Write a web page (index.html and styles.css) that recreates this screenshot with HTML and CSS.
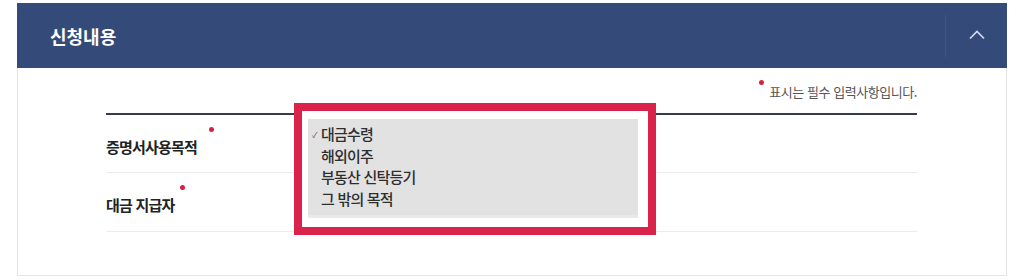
FILE: index.html
```html
<!DOCTYPE html>
<html lang="ko">
<head>
<meta charset="utf-8">
<link rel="stylesheet" href="styles.css">
</head>
<body>
<div class="page">
  <div class="section">
    <div class="section-head">
      <h2 class="section-title">신청내용</h2>
      <div class="toggle">
        <svg width="16" height="10" viewBox="0 0 16 10"><polyline points="1,8.5 8,1.5 15,8.5" fill="none" stroke="#d3ddf0" stroke-width="1.6"/></svg>
      </div>
    </div>
    <div class="section-body">
      <p class="note"><span class="dot note-dot"></span>표시는 필수 입력사항입니다.</p>
      <div class="form">
        <div class="row">
          <div class="label">증명서사용목적<span class="dot label-dot wide"></span></div>
        </div>
        <div class="row">
          <div class="label">대금 지급자<span class="dot label-dot"></span></div>
        </div>
      </div>
    </div>
  </div>
  <div class="highlight">
    <ul class="listbox">
      <li class="opt selected"><span class="check">✓</span>대금수령</li>
      <li class="opt">해외이주</li>
      <li class="opt">부동산 신탁등기</li>
      <li class="opt">그 밖의 목적</li>
    </ul>
  </div>
</div>
</body>
</html>
```

FILE: styles.css
```css
* { box-sizing: border-box; }
html, body { margin: 0; padding: 0; background: #ffffff; }
body { font-family: "Noto Sans CJK KR", "Noto Sans", sans-serif; color: #333; }
.page { position: relative; width: 1024px; height: 280px; padding-top: 3px; }
.section { margin-left: 17px; width: 990px; }
.section-head {
  height: 65px; background: #344b79;
  display: flex; align-items: center; justify-content: space-between;
}
.section-title {
  margin: 0; padding-left: 33px; color: #ffffff;
  font-size: 18px; font-weight: 700; letter-spacing: 0; line-height: 24px;
}
.toggle {
  width: 62px; height: 42px; border-left: 1px solid #3f5687;
  display: flex; align-items: center; justify-content: center;
}
.toggle svg { display: block; margin-top: -1px; }
.section-body {
  border: 1px solid #e4e4e4; border-top: none;
  padding: 14px 89px 43px 88px; height: 208px;
}
.note {
  margin: 0 0 11px; font-size: 13px; line-height: 20px;
  color: #555; letter-spacing: -0.45px;
  display: flex; justify-content: flex-end; align-items: flex-start;
}
.dot { display: inline-block; width: 5px; height: 5px; border-radius: 50%; background: #d6223f; flex: none; }
.note-dot { margin-top: -2px; margin-right: 5px; }
.form { border-top: 2px solid #333c4f; }
.row {
  height: 58px; border-bottom: 1px solid #ececec;
  display: flex; align-items: center; padding-top: 7px;
}
.row + .row { height: 59px; padding-top: 5px; }
.label {
  display: flex; align-items: flex-start; font-size: 15px; font-weight: 700;
  line-height: 20px; letter-spacing: -0.8px; color: #222;
}
.label-dot { margin-top: -10px; margin-left: 6px; }
.label-dot.wide { margin-left: 12px; }
.highlight {
  position: absolute; left: 294px; top: 103px; width: 362px; height: 132px;
  border: 8px solid #d9234a; background: #ffffff;
  padding: 8px 10px 8px 6px;
}
.listbox {
  list-style: none; margin: 0; height: 99px;
  background: #e2e2e2; border-bottom: 3px solid #e9e9e9;
  padding: 4px 0 0 13px;
}
.opt {
  position: relative; font-size: 15px; font-weight: 500; line-height: 21.7px; color: #2e2e2e; letter-spacing: -0.8px;
}
.check {
  position: absolute; left: -9px; top: 1px; font-size: 8px; color: #555; font-weight: 400;
}
```
